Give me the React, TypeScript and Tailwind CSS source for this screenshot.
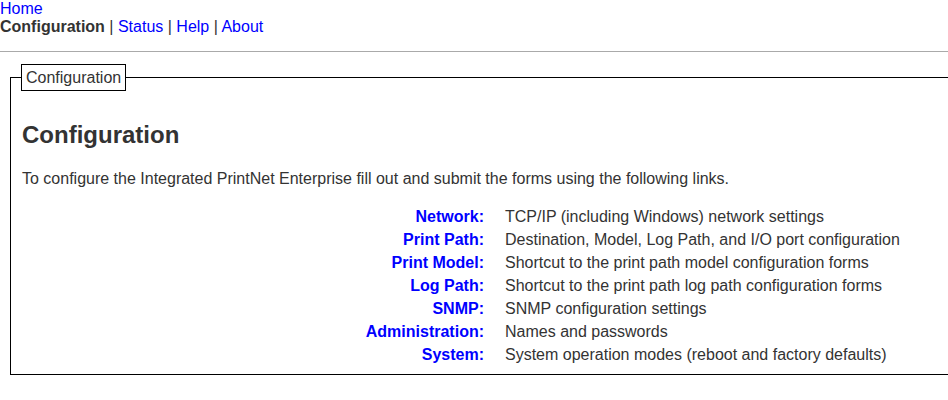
const links = [
  { name: "Network", desc: "TCP/IP (including Windows) network settings" },
  { name: "Print Path", desc: "Destination, Model, Log Path, and I/O port configuration" },
  { name: "Print Model", desc: "Shortcut to the print path model configuration forms" },
  { name: "Log Path", desc: "Shortcut to the print path log path configuration forms" },
  { name: "SNMP", desc: "SNMP configuration settings" },
  { name: "Administration", desc: "Names and passwords" },
  { name: "System", desc: "System operation modes (reboot and factory defaults)" },
];

export default function App() {
  return (
    <div className="w-[948px] h-[400px] overflow-hidden bg-white text-[16px] leading-[17px] text-[#333] font-['Liberation_Sans',Arial,sans-serif]">
      {/* top navigation */}
      <div>
        <a className="text-[#0000ff]">Home</a>
      </div>
      <div className="mt-[1px]">
        <b>Configuration</b> | <a className="text-[#0000ff]">Status</a> |{" "}
        <a className="text-[#0000ff]">Help</a> | <a className="text-[#0000ff]">About</a>
      </div>
      <hr className="mt-[16px] border-t border-[#aaa] w-full" />

      <fieldset className="ml-[10px] mt-[12px] w-[1000px] border border-black pl-[11px] pb-[8px]">
        <legend className="-ml-[1px] border border-black px-[4px] h-[27px] leading-[25px]">Configuration</legend>

        <h1 className="mt-[30px] text-[24px] leading-[28px] font-bold">Configuration</h1>
        <p className="mt-[21px] leading-[18px]">
          To configure the Integrated PrintNet Enterprise fill out and submit the forms using the following links.
        </p>

        <div className="mt-[17px] grid grid-cols-[462px_1fr] leading-[23px]">
          {links.map((l) => (
            <div key={l.name} className="contents">
              <div className="text-right font-bold text-[#0000ff]">
                {l.name}<span>:</span>
              </div>
              <div className="pl-[21px]">{l.desc}</div>
            </div>
          ))}
        </div>
      </fieldset>
    </div>
  );
}
